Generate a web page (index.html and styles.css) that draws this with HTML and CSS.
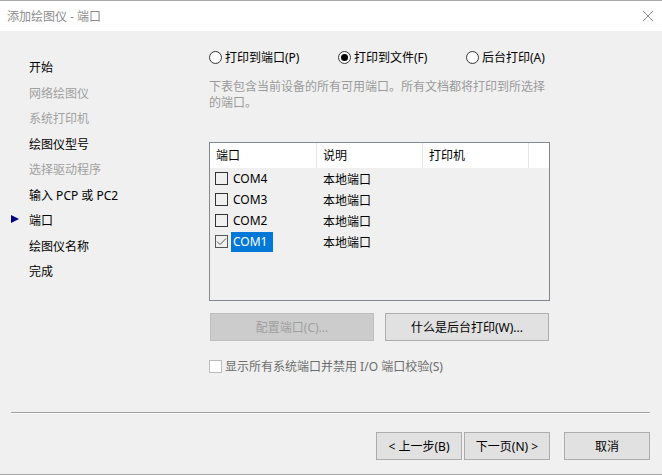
FILE: index.html
```html
<!DOCTYPE html>
<html lang="zh-CN">
<head>
    <meta charset="UTF-8">
    <title>添加绘图仪 - 端口</title>
    <link rel="stylesheet" href="styles.css">
</head>
<body>
    <div class="janela">
        <div class="titulo">
            <span>添加绘图仪 - 端口</span>
            <svg class="fechar" width="12" height="12" viewBox="0 0 12 12">
                <path d="M1 1 L11 11 M11 1 L1 11" stroke="#8a8a8a" stroke-width="1" fill="none"/>
            </svg>
        </div>

        <div class="conteudo">
            <ul class="passos">
                <li>开始</li>
                <li class="inativo">网络绘图仪</li>
                <li class="inativo">系统打印机</li>
                <li>绘图仪型号</li>
                <li class="inativo">选择驱动程序</li>
                <li>输入 PCP 或 PC2</li>
                <li class="atual">端口</li>
                <li>绘图仪名称</li>
                <li>完成</li>
            </ul>

            <div class="principal">
                <div class="opcoes">
                    <label class="opcao op1"><span class="radio"></span>打印到端口(P)</label>
                    <label class="opcao op2"><span class="radio marcado"></span>打印到文件(F)</label>
                    <label class="opcao"><span class="radio"></span>后台打印(A)</label>
                </div>

                <p class="descricao">下表包含当前设备的所有可用端口。所有文档都将打印到所选择的端口。</p>

                <div class="lista">
                    <div class="cabecalho">
                        <div class="col">端口</div>
                        <div class="col">说明</div>
                        <div class="col">打印机</div>
                        <div class="col resto"></div>
                    </div>
                    <div class="linha">
                        <div class="col"><span class="caixa"></span><span class="nome">COM4</span></div>
                        <div class="col">本地端口</div>
                    </div>
                    <div class="linha">
                        <div class="col"><span class="caixa"></span><span class="nome">COM3</span></div>
                        <div class="col">本地端口</div>
                    </div>
                    <div class="linha">
                        <div class="col"><span class="caixa"></span><span class="nome">COM2</span></div>
                        <div class="col">本地端口</div>
                    </div>
                    <div class="linha">
                        <div class="col">
                            <span class="caixa marcada">
                                <svg width="11" height="11" viewBox="0 0 11 11"><path d="M1 5.5 L4 8.5 L10 2.5" stroke="#555" stroke-width="1" fill="none"/></svg>
                            </span>
                            <span class="nome selecionado">COM1</span>
                        </div>
                        <div class="col">本地端口</div>
                    </div>
                </div>

                <div class="botoes">
                    <button class="desativado">配置端口(C)...</button>
                    <button>什么是后台打印(W)...</button>
                </div>

                <label class="verificar"><span class="caixa desligada"></span>显示所有系统端口并禁用 I/O 端口校验(S)</label>
            </div>
        </div>

        <div class="separador"></div>

        <div class="rodape">
            <button class="pequeno">&lt; 上一步(B)</button>
            <button class="pequeno">下一页(N) &gt;</button>
            <button class="pequeno cancelar">取消</button>
        </div>
    </div>
</body>
</html>
```

FILE: styles.css
```css
body {
    margin: 0;
    font-family: 'Noto Sans', 'Noto Sans CJK SC', sans-serif;
    font-size: 12px;
    color: #000;
    background-color: #f0f0f0;
}

.janela {
    width: 662px;
    height: 475px;
    box-sizing: border-box;
    border-top: 1px solid #a8a8a8;
    border-bottom: 1px solid #a8a8a8;
    display: flex;
    flex-direction: column;
}

.titulo {
    height: 30px;
    background-color: #fff;
    display: flex;
    align-items: center;
    justify-content: space-between;
    padding: 0 8px 0 7px;
    color: #8c8c8c;
}

.conteudo {
    display: flex;
    height: 381px;
}

/* lista de passos à esquerda */
.passos {
    list-style: none;
    margin: 0;
    padding: 24px 0 0 0;
    width: 209px;
}

.passos li {
    position: relative;
    height: 25.5px;
    line-height: 25.5px;
    padding-left: 29px;
}

.passos li.inativo {
    color: #a0a0a0;
}

.passos li.atual::before {
    content: '';
    position: absolute;
    left: 11px;
    top: 7px;
    border-left: 8px solid #000080;
    border-top: 4.5px solid transparent;
    border-bottom: 4.5px solid transparent;
}

.principal {
    width: 341px;
    padding-top: 18px;
}

.opcoes {
    display: flex;
    height: 16px;
    align-items: center;
}

.opcao {
    display: flex;
    align-items: center;
    gap: 3px;
}

.op1 {
    width: 129px;
}

.op2 {
    width: 128px;
}

.radio {
    width: 11px;
    height: 11px;
    border: 1px solid #333;
    border-radius: 50%;
    background-color: #fff;
    display: flex;
    align-items: center;
    justify-content: center;
}

.radio.marcado::after {
    content: '';
    width: 7px;
    height: 7px;
    border-radius: 50%;
    background-color: #000;
}

.descricao {
    margin: 14px 0 0 0;
    line-height: 16px;
    color: #9a9a9a;
}

.lista {
    margin-top: 31px;
    height: 157px;
    border: 1px solid #828790;
    background-color: #f0f0f0;
}

.cabecalho {
    display: flex;
    height: 25px;
    background-color: #fff;
}

.cabecalho .col {
    width: 106px;
    padding-left: 6px;
    box-sizing: border-box;
    line-height: 25px;
    border-right: 1px solid #e5e5e5;
}

.cabecalho .col:first-child {
    width: 107px;
}

.cabecalho .col.resto {
    flex: 1;
    border-right: none;
}

.linha {
    display: flex;
    height: 21px;
    align-items: center;
}

.linha .col {
    width: 107px;
    display: flex;
    align-items: center;
    padding-left: 6px;
    box-sizing: border-box;
}

.linha .col:first-child {
    padding-left: 5px;
}

.caixa {
    width: 11px;
    height: 11px;
    border: 1px solid #333;
    display: flex;
    align-items: center;
    justify-content: center;
}

.caixa.marcada {
    border-color: #555;
}

.nome {
    margin-left: 3px;
    padding: 0 2px;
    line-height: 20px;
}

.nome.selecionado {
    background-color: #0078d7;
    color: #fff;
    padding-right: 6px;
}

.botoes {
    display: flex;
    gap: 11px;
    margin-top: 12px;
    padding-left: 1px;
}

button {
    font-family: 'Noto Sans', 'Noto Sans CJK SC', sans-serif;
    font-size: 12px;
    width: 164px;
    height: 28px;
    padding: 0;
    background-color: #e1e1e1;
    border: 1px solid #adadad;
    color: #000;
}

button.desativado {
    background-color: #cccccc;
    border-color: #bfbfbf;
    color: #a0a0a0;
}

.verificar {
    display: flex;
    align-items: center;
    gap: 3px;
    margin-top: 16px;
    color: #6d6d6d;
}

.caixa.desligada {
    border-color: #bcbcbc;
    background-color: #fff;
}

.separador {
    margin-left: 11px;
    width: 639px;
    height: 1px;
    background-color: #a0a0a0;
    border-bottom: 1px solid #fff;
}

.rodape {
    display: flex;
    padding: 18px 0 0 376px;
}

button.pequeno {
    width: 86px;
    margin-right: 2px;
}

button.cancelar {
    margin-left: 12px;
}
```
